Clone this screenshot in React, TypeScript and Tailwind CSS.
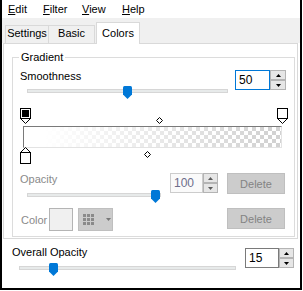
import React from "react";

function Thumb() {
  return (
    <svg width="9" height="13" viewBox="0 0 9 13" className="block">
      <path d="M0 1.5Q0 0 1.5 0H7.5Q9 0 9 1.5V8.5L4.5 13L0 8.5Z" fill="#0078d7" />
    </svg>
  );
}

function Slider({ widthClass, thumbClass }: { widthClass: string; thumbClass: string }) {
  return (
    <div className={`relative h-[14px] pt-[5px] ${widthClass}`}>
      <div className="h-[4px] border border-[#d6d6d6] bg-[#e7eaea]" />
      <div className={`absolute top-[2px] ${thumbClass}`}>
        <Thumb />
      </div>
    </div>
  );
}

function Arrow({ up, color }: { up: boolean; color: string }) {
  return (
    <svg width="5" height="3" viewBox="0 0 5 3" className="block">
      <path d={up ? "M2.5 0L5 3H0Z" : "M0 0H5L2.5 3Z"} fill={color} />
    </svg>
  );
}

function Spin({
  value,
  boxClass,
  btnClass,
  arrow,
}: {
  value: string;
  boxClass: string;
  btnClass: string;
  arrow: string;
}) {
  return (
    <div className="flex">
      <div className={`flex h-[20px] items-center border pl-[3px] text-[12px] leading-[14px] ${boxClass}`}>
        {value}
      </div>
      <div className={`flex h-[20px] flex-col ${btnClass}`}>
        <div className="flex h-[10px] items-center justify-center border border-[#b4b4b4] bg-[#e6e6e6]">
          <Arrow up={true} color={arrow} />
        </div>
        <div className="flex h-[10px] items-center justify-center border border-[#b4b4b4] bg-[#e6e6e6]">
          <Arrow up={false} color={arrow} />
        </div>
      </div>
    </div>
  );
}

function DeleteBtn() {
  return (
    <div className="flex h-[21px] w-[58px] items-center justify-center border border-[#bfbfbf] bg-[#cccccc] leading-[14px] text-[#838383]">
      Delete
    </div>
  );
}

function Diamond() {
  return (
    <svg width="7" height="7" viewBox="0 0 7 7" className="block">
      <path d="M3.5 0.5L6.5 3.5L3.5 6.5L0.5 3.5Z" fill="#fff" stroke="#000" strokeWidth="1" />
    </svg>
  );
}

function TopMarker({ dark }: { dark: boolean }) {
  return (
    <svg width="11" height="16" viewBox="0 0 11 16" className="block">
      <path d="M0.5 10.5H10.5L5.5 15.5Z" fill="#fff" stroke="#000" strokeWidth="1" />
      <rect x="0.5" y="0.5" width="10" height="10" fill="#fff" stroke="#000" strokeWidth="1" />
      {dark && <rect x="2" y="2" width="7" height="7" fill="#000" />}
    </svg>
  );
}

function BottomMarker() {
  return (
    <svg width="11" height="17" viewBox="0 0 11 17" className="block">
      <path d="M5.5 0.5L10.5 5.5H0.5Z" fill="#fff" stroke="#000" strokeWidth="1" />
      <rect x="0.5" y="5.5" width="10" height="11" fill="#fff" stroke="#000" strokeWidth="1" />
    </svg>
  );
}

function GridIcon() {
  const cells = [];
  for (let r = 0; r < 3; r++) {
    for (let c = 0; c < 3; c++) {
      cells.push(<rect key={`${r}-${c}`} x={c * 4} y={r * 4} width="3" height="3" fill="#8a8a8a" />);
    }
  }
  return (
    <svg width="11" height="11" viewBox="0 0 11 11" className="block">
      {cells}
    </svg>
  );
}

export default function App() {
  return (
    <div className="flex h-[290px] w-[302px] flex-col border-x-2 border-b-2 border-black bg-white font-['Liberation_Sans',Arial,sans-serif] text-[11px] text-black">
      {/* menu bar */}
      <div className="flex h-[18px] items-center pl-[6px] leading-[18px]">
        <span className="w-[35px]">
          <u>E</u>dit
        </span>
        <span className="w-[39px]">
          <u>F</u>ilter
        </span>
        <span className="w-[40px]">
          <u>V</u>iew
        </span>
        <span>
          <u>H</u>elp
        </span>
      </div>

      {/* tabs */}
      <div className="flex h-[25px] items-end bg-[#f0f0f0] pl-[3px]">
        <div className="flex h-[18px] w-[44px] justify-center border-x border-t border-[#d9d9d9] leading-[14px]">
          Settings
        </div>
        <div className="flex h-[18px] w-[46px] justify-center border-r border-t border-[#d9d9d9] leading-[14px]">
          Basic
        </div>
        <div className="relative z-10 -mb-px ml-px flex h-[22px] w-[44px] justify-center border-x border-t border-[#d9d9d9] bg-white pt-[3px] leading-[14px]">
          Colors
        </div>
      </div>

      {/* panel */}
      <div className="ml-px w-[295px] border border-[#d9d9d9] bg-white">
        <div className="relative mb-px ml-[8px] mt-[13px] w-[283px] border border-[#dcdcdc] pb-[5px] pt-[11px]">
          <div className="absolute -top-[8px] left-[6px] bg-white px-[2px] leading-[14px]">Gradient</div>

          {/* Smoothness */}
          <div className="flex">
            <div className="w-[222px]">
              <div className="h-[15px] pl-[7px] leading-[14px]">Smoothness</div>
              <div className="ml-[14px]">
                <Slider widthClass="w-[201px]" thumbClass="left-[96px]" />
              </div>
            </div>
            <div className="mt-px">
              <Spin value="50" boxClass="w-[35px] border-[#0078d7] bg-white text-black" btnClass="w-[16px]" arrow="#000" />
            </div>
          </div>

          {/* gradient editor */}
          <div className="mt-[10px]">
            <div className="relative h-[18px]">
              <div className="absolute left-[7px] top-0">
                <TopMarker dark={true} />
              </div>
              <div className="absolute left-[143px] top-[9px]">
                <Diamond />
              </div>
              <div className="absolute left-[264px] top-0">
                <TopMarker dark={false} />
              </div>
            </div>
            <div className="ml-[10px] h-[22px] w-[259px] border border-[#e3e3e3] border-l-[#7a7a7a] border-t-[#7a7a7a] bg-[image:linear-gradient(to_right,#ffffff_8%,rgba(255,255,255,0)_96%),conic-gradient(#d2d2d2_25%,#ffffff_0_50%,#d2d2d2_0_75%,#ffffff_0)] bg-[length:100%_100%,8px_8px]" />
            <div className="relative h-[17px]">
              <div className="absolute -top-px left-[7px]">
                <BottomMarker />
              </div>
              <div className="absolute left-[131px] top-[3px]">
                <Diamond />
              </div>
            </div>
          </div>

          {/* Opacity */}
          <div className="mt-[7px] flex">
            <div className="w-[157px]">
              <div className="h-[16px] pl-[7px] leading-[14px] text-[#8a8a8a]">Opacity</div>
              <div className="ml-[14px]">
                <Slider widthClass="w-[134px]" thumbClass="left-[124px]" />
              </div>
            </div>
            <div className="mt-px">
              <Spin value="100" boxClass="w-[33px] border-[#cccccc] bg-[#fafafa] text-[#6d6d8a]" btnClass="w-[15px]" arrow="#5a5a5a" />
            </div>
            <div className="ml-[9px] mt-px">
              <DeleteBtn />
            </div>
          </div>

          {/* Color */}
          <div className="mt-[6px] flex h-[23px] items-start">
            <div className="flex h-[23px] w-[36px] items-center pl-[8px] leading-[14px] text-[#8a8a8a]">Color</div>
            <div className="h-[23px] w-[24px] border border-[#b4b4b4] bg-[#f0f0f0]" />
            <div className="ml-[5px] flex h-[23px] w-[35px] items-center border border-[#bfbfbf] bg-[#cccccc] pl-[4px]">
              <GridIcon />
              <div className="ml-[12px]">
                <Arrow up={false} color="#777" />
              </div>
            </div>
            <div className="ml-[114px]">
              <DeleteBtn />
            </div>
          </div>
        </div>
      </div>

      {/* Overall opacity */}
      <div className="mt-[6px] flex">
        <div className="w-[243px]">
          <div className="h-[16px] pl-[10px] leading-[14px]">Overall Opacity</div>
          <div className="ml-[17px]">
            <Slider widthClass="w-[217px]" thumbClass="left-[30px]" />
          </div>
        </div>
        <div className="mt-[3px]">
          <Spin value="15" boxClass="w-[34px] border-[#7a7a7a] bg-white text-black" btnClass="w-[15px]" arrow="#000" />
        </div>
      </div>
    </div>
  );
}
